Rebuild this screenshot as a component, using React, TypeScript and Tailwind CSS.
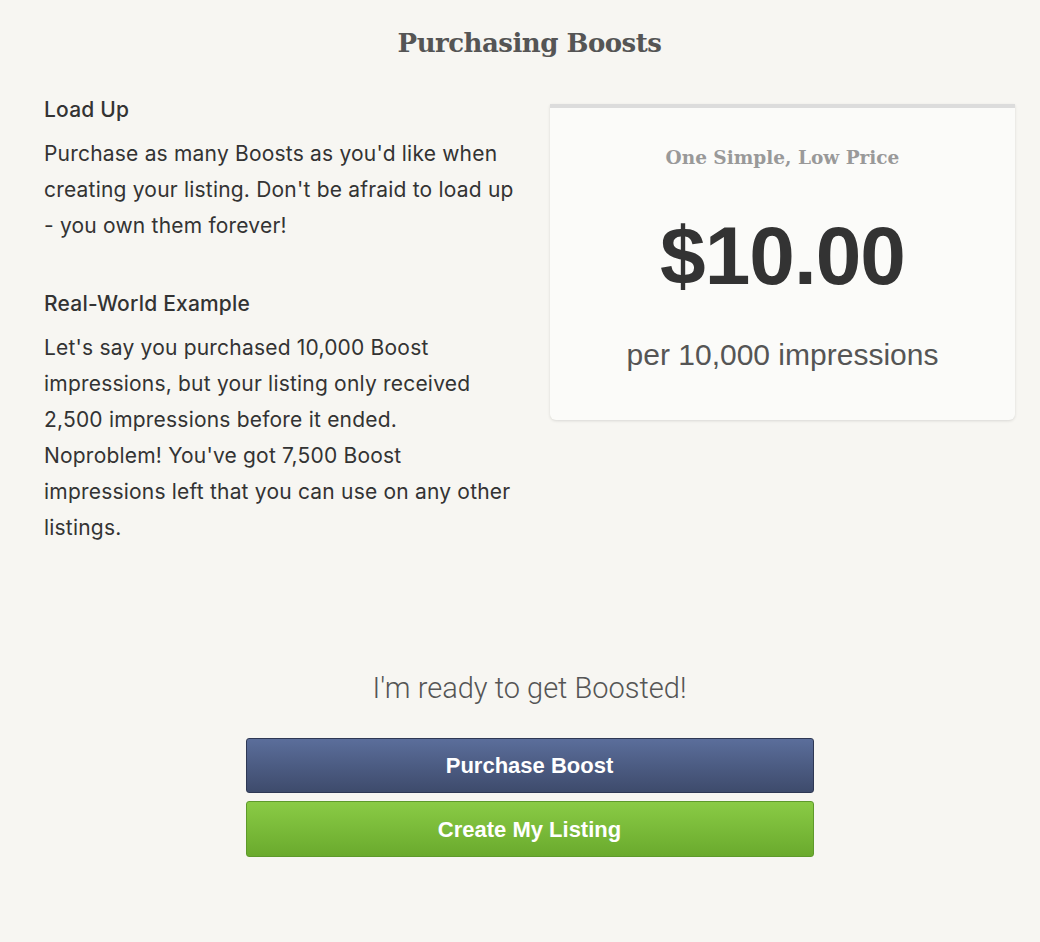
const serif = { fontFamily: '"DejaVu Serif", serif' };

function Section({ title, children }: { title: string; children: React.ReactNode }) {
  return (
    <div>
      <h3 className="text-[21px] font-medium leading-[36px] tracking-[0.2px] text-[#333]">{title}</h3>
      <p className="mt-[8px] text-[21px] leading-[36px] tracking-[0.2px] text-[#333]">{children}</p>
    </div>
  );
}

function PriceCard() {
  return (
    <div className="mt-[12px] flex h-[316px] w-[465px] shrink-0 flex-col items-center rounded-b-md border-t-4 border-[#dcdcdc] bg-[#fbfbf9] shadow-[0_1px_3px_rgba(0,0,0,0.12)] font-['Liberation_Sans',Arial,sans-serif]">
      <div className="mt-[35px] font-['DejaVu_Serif',serif] text-[18.5px] font-bold leading-[30px] text-[#999]">
        One Simple, Low Price
      </div>
      <div className="mt-[33px] text-[82px] font-bold leading-[100px] tracking-[-1px] text-[#333]">$10.00</div>
      <div className="mt-[31px] text-[30px] leading-[36px] text-[#555]">per 10,000 impressions</div>
    </div>
  );
}

export default function App() {
  return (
    <div className="min-h-screen bg-[#f7f6f2] pb-[80px] pl-[44px] pr-[25px] pt-[26px] font-['Inter',sans-serif]">
      <h1 className="text-center text-[26px] font-bold leading-[34px] tracking-[-0.5px] text-[#555]" style={serif}>
        Purchasing Boosts
      </h1>
      <div className="mt-[32px] flex gap-[32px]">
        <div className="flex w-[474px] flex-col gap-[42px]">
          <Section title="Load Up">
            Purchase as many Boosts as you'd like when creating your listing. Don't be afraid to load up - you own them forever!
          </Section>
          <Section title="Real-World Example">
            Let's say you purchased 10,000 Boost impressions, but your listing only received 2,500 impressions before it
            ended. Noproblem! You've got 7,500 Boost impressions left that you can use on any other listings.
          </Section>
        </div>
        <PriceCard />
      </div>
      <div className="mt-[122px] text-center font-['Roboto',sans-serif] text-[29px] font-light leading-[40px] text-[#555]">
        I'm ready to get Boosted!
      </div>
      <div className="mx-auto mt-[30px] flex w-[568px] flex-col gap-[8px] font-['Liberation_Sans',Arial,sans-serif]">
        <button className="h-[55px] rounded-[3px] border border-[#2e3854] bg-gradient-to-b from-[#5b6e9b] to-[#3e4b6c] text-[22px] font-bold text-white">
          Purchase Boost
        </button>
        <button className="h-[56px] rounded-[3px] border border-[#5e9a2b] bg-gradient-to-b from-[#8acb45] to-[#6aaa2d] text-[22px] font-bold text-white">
          Create My Listing
        </button>
      </div>
    </div>
  );
}
